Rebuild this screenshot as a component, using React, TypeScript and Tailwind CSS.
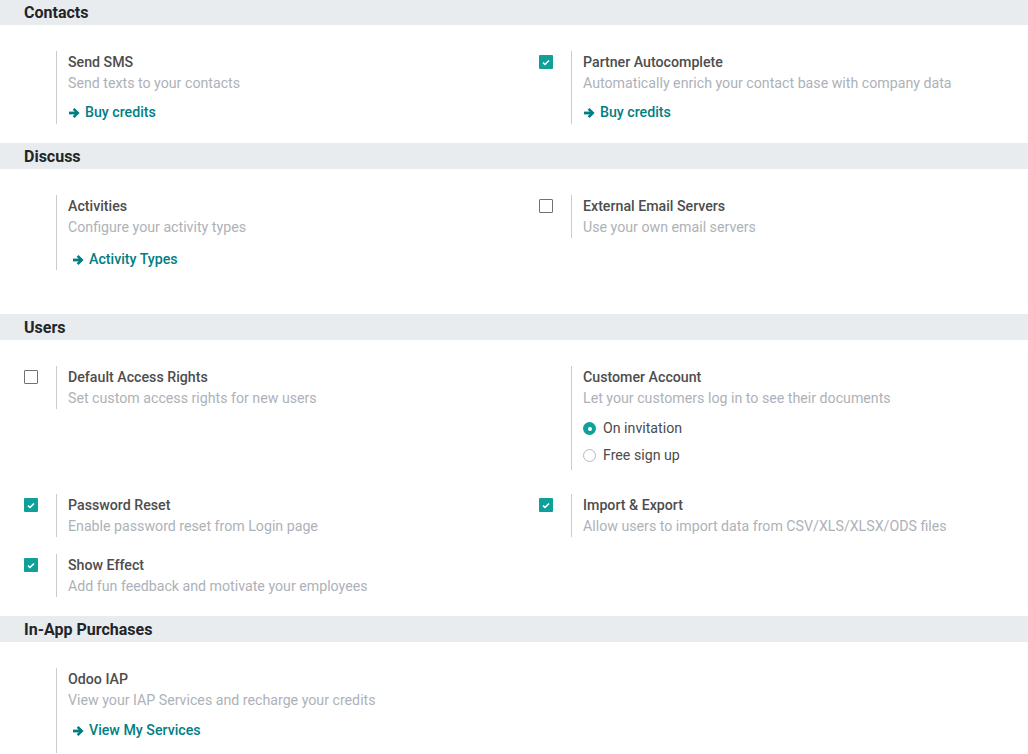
import React from "react";

function Check({ checked }: { checked?: boolean }) {
  if (checked) {
    return (
      <div className="w-[14px] h-[14px] rounded-[1px] bg-[#0ea099] flex items-center justify-center">
        <svg width="8" height="7" viewBox="0 0 8 7">
          <path d="M1 3.6 L3 5.5 L7 1.5" stroke="white" strokeWidth="1.6" fill="none" />
        </svg>
      </div>
    );
  }
  return <div className="w-[14px] h-[14px] rounded-[1px] border-[1.5px] border-[#6f7377] bg-white" />;
}

function Radio({ checked, label }: { checked?: boolean; label: string }) {
  return (
    <div className="flex items-center h-[27px]">
      {checked ? (
        <div className="w-[13px] h-[13px] rounded-full bg-[#0ea099] flex items-center justify-center">
          <div className="w-[4px] h-[4px] rounded-full bg-white" />
        </div>
      ) : (
        <div className="w-[13px] h-[13px] rounded-full border border-[#b5b9be] bg-white" />
      )}
      <span className="ml-[7px] text-[14.2px] text-[#4c4c4c]">{label}</span>
    </div>
  );
}

function Arrow() {
  return (
    <svg width="12" height="12" viewBox="0 0 12 12" className="mr-[5px] shrink-0">
      <path d="M1 6 H9.5" stroke="currentColor" strokeWidth="2.8" fill="none" />
      <path d="M5.6 1.8 L9.8 6 L5.6 10.2" stroke="currentColor" strokeWidth="2.6" fill="none" strokeLinejoin="miter" />
    </svg>
  );
}

function LinkBtn({ label, indent, mt }: { label: string; indent?: boolean; mt: string }) {
  return (
    <div className={`flex items-center h-[21px] ${mt} ${indent ? "pl-[4px]" : ""} text-[#017e84] font-medium text-[14.2px]`}>
      <Arrow />
      <span>{label}</span>
    </div>
  );
}

type BoxProps = {
  checkbox?: "on" | "off";
  title: string;
  desc: string;
  children?: React.ReactNode;
  extra?: string;
};

function Box({ checkbox, title, desc, children, extra }: BoxProps) {
  return (
    <div className="flex">
      <div className="w-[56px] pl-[24px] pt-[4px] shrink-0">
        {checkbox === "on" && <Check checked />}
        {checkbox === "off" && <Check />}
      </div>
      <div className={`border-l border-[#c9cccf] pl-[11px] pt-[1px] ${extra ?? ""}`}>
        <div className="text-[14.2px] leading-[21px] font-medium text-[#4d4d4d]">{title}</div>
        <div className="text-[14.2px] leading-[21px] text-[#adb2b8]">{desc}</div>
        {children}
      </div>
    </div>
  );
}

function Header({ title, h }: { title: string; h: string }) {
  return (
    <div className={`${h} bg-[#e9ecef] px-[24px] flex items-center text-[16px] font-bold text-[#212529]`}>
      {title}
    </div>
  );
}

export default function App() {
  return (
    <div className="w-[1028px] h-[754px] overflow-hidden bg-white" style={{ fontFamily: "Roboto, 'Liberation Sans', sans-serif" }}>
      <Header title="Contacts" h="h-[25px]" />
      <div className="grid grid-cols-[515px_1fr] pt-[26px] pb-[19px]">
        <Box title="Send SMS" desc="Send texts to your contacts" extra="pb-[1px]">
          <LinkBtn label="Buy credits" mt="mt-[8px]" />
        </Box>
        <Box checkbox="on" title="Partner Autocomplete" desc="Automatically enrich your contact base with company data" extra="pb-[1px]">
          <LinkBtn label="Buy credits" mt="mt-[8px]" />
        </Box>
      </div>

      <Header title="Discuss" h="h-[26px] pt-[2px]" />
      <div className="grid grid-cols-[515px_1fr] pt-[26px] pb-[44px] items-start">
        <Box title="Activities" desc="Configure your activity types">
          <LinkBtn label="Activity Types" indent mt="mt-[11px]" />
        </Box>
        <Box checkbox="off" title="External Email Servers" desc="Use your own email servers" />
      </div>

      <Header title="Users" h="h-[26px] pt-[2px]" />
      <div className="grid grid-cols-[515px_1fr] pt-[26px] pb-[19px] items-start">
        <Box checkbox="off" title="Default Access Rights" desc="Set custom access rights for new users" />
        <Box title="Customer Account" desc="Let your customers log in to see their documents" extra="pb-[1px]">
          <div className="mt-[6px]">
            <Radio checked label="On invitation" />
            <Radio label="Free sign up" />
          </div>
        </Box>
        <div className="col-span-2 h-[24px]" />
        <Box checkbox="on" title="Password Reset" desc="Enable password reset from Login page" />
        <Box checkbox="on" title="Import & Export" desc="Allow users to import data from CSV/XLS/XLSX/ODS files" />
        <div className="col-span-2 h-[17px]" />
        <Box checkbox="on" title="Show Effect" desc="Add fun feedback and motivate your employees" />
        <div />
      </div>

      <Header title="In-App Purchases" h="h-[26px] pt-[2px]" />
      <div className="grid grid-cols-[515px_1fr] pt-[26px] items-start">
        <Box title="Odoo IAP" desc="View your IAP Services and recharge your credits" extra="pb-[12px]">
          <LinkBtn label="View My Services" indent mt="mt-[9px]" />
        </Box>
      </div>
    </div>
  );
}
